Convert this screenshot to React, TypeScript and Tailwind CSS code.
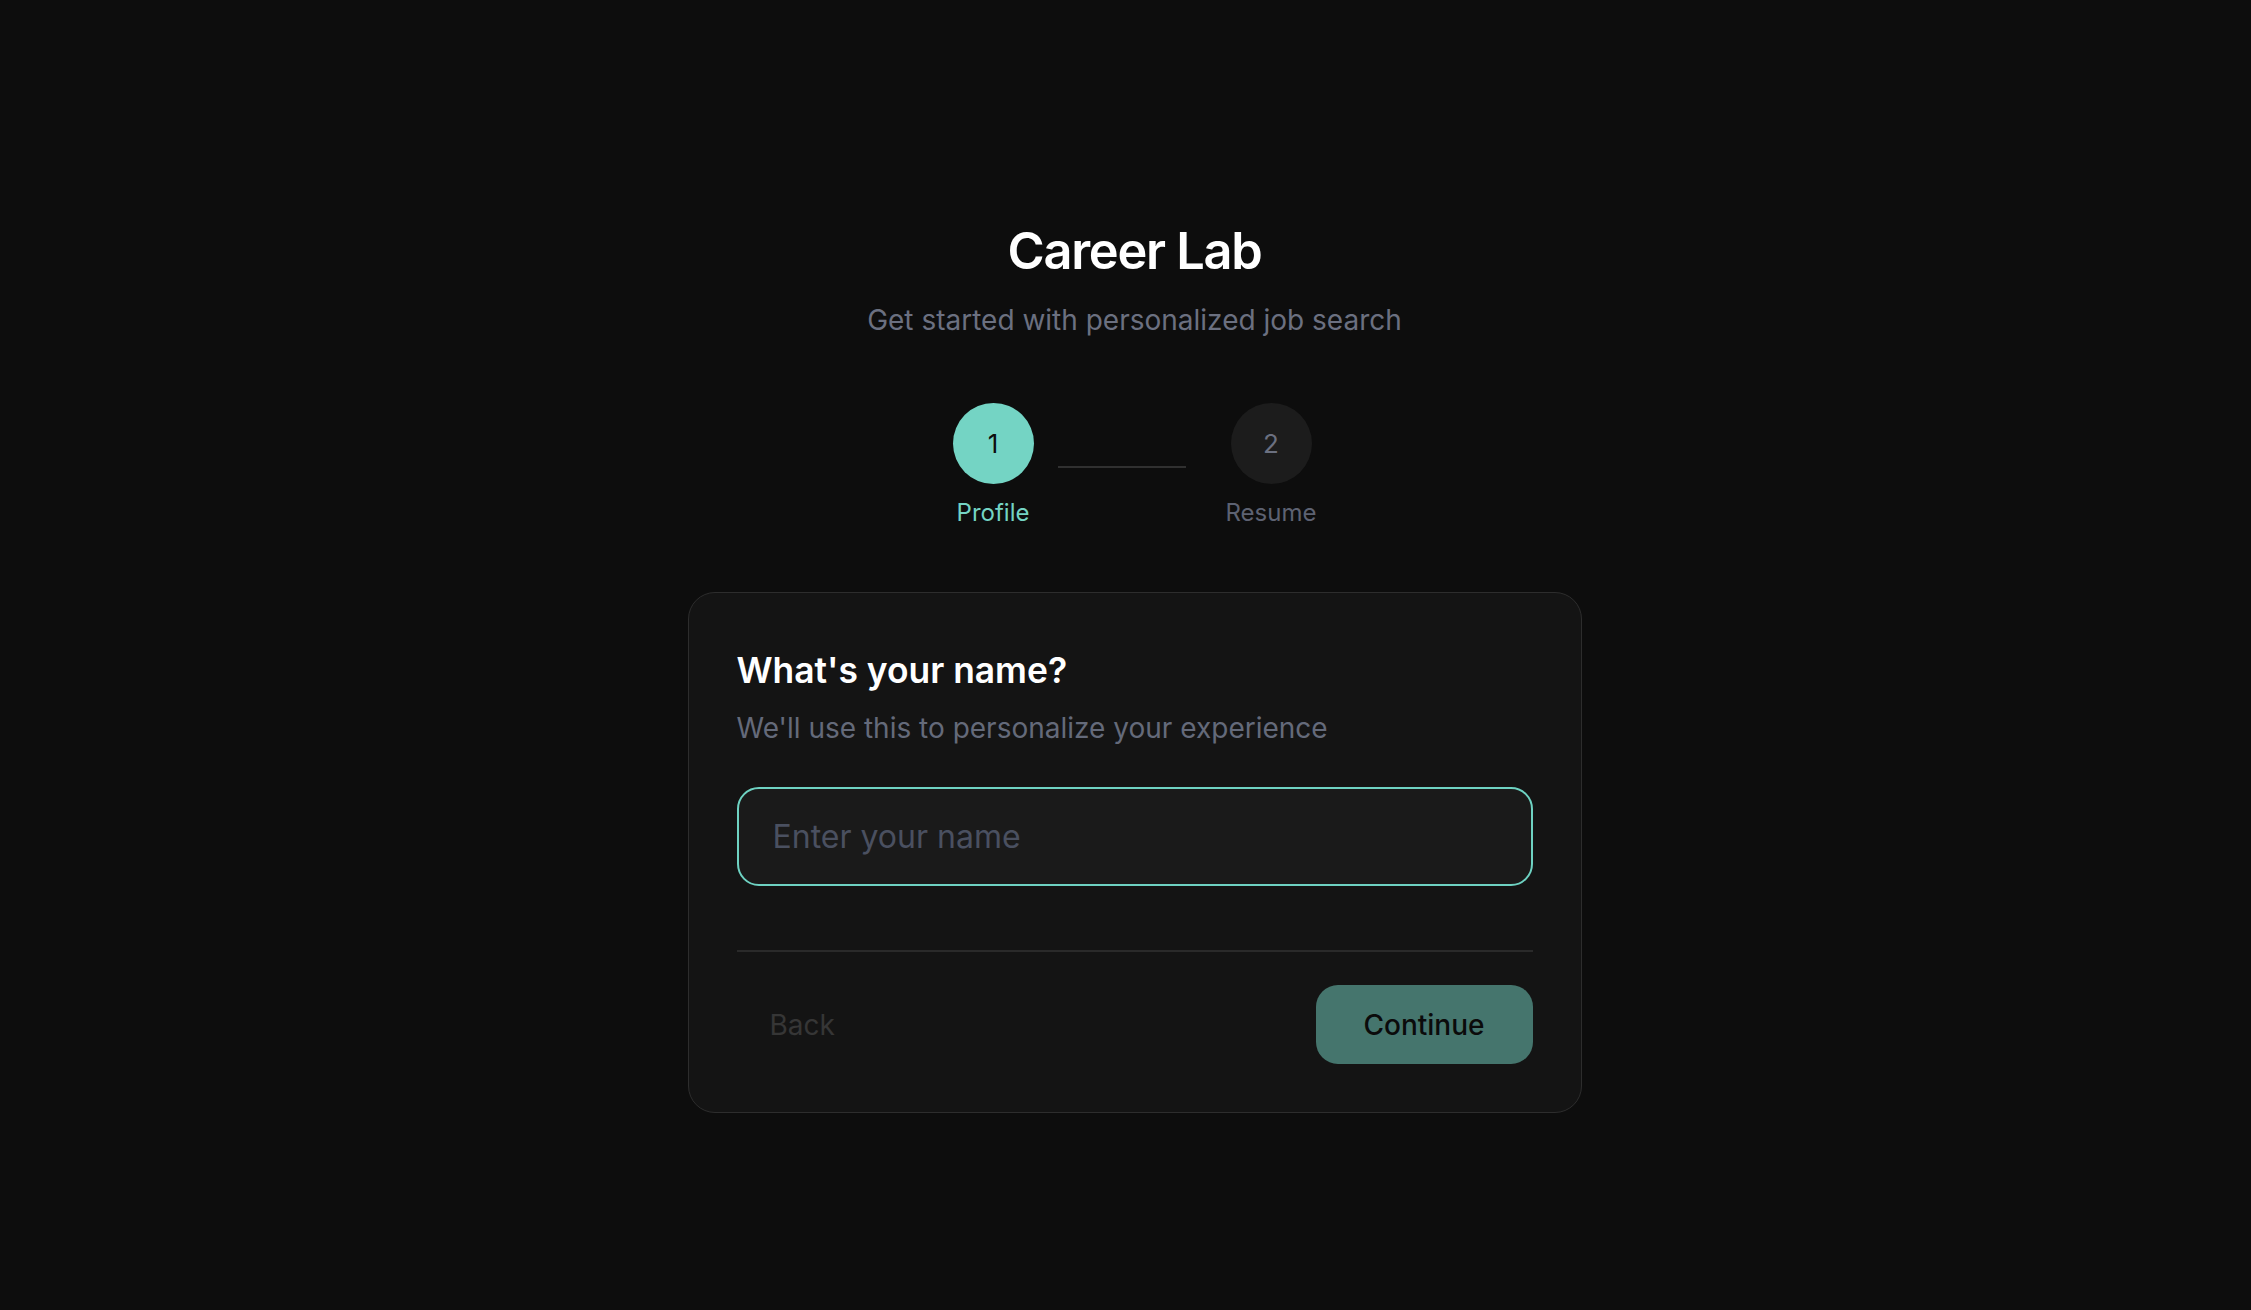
import { useState } from 'react';

const steps = [
  { id: 1, label: 'Profile' },
  { id: 2, label: 'Resume' },
];

const StepDot = (props: { id: number; label: string; active: boolean }) => {
  return (
    <div className="flex flex-col items-center">
      <div
        className={
          props.active
            ? 'flex items-center justify-center size-[81px] rounded-full bg-[#74d4c4] text-[#0d0d0d] text-[26px]'
            : 'flex items-center justify-center size-[81px] rounded-full bg-[#1c1c1c] text-[#6b7080] text-[26px]'
        }
      >
        {props.id}
      </div>
      <span
        className={
          props.active
            ? 'mt-[12px] text-[24px] leading-[34px] text-[#74d4c4]'
            : 'mt-[12px] text-[24px] leading-[34px] text-[#5d6272]'
        }
      >
        {props.label}
      </span>
    </div>
  );
};

export default function App() {
  const [name, setName] = useState('');

  return (
    <div
      className="min-h-screen w-full bg-[#0d0d0d] pl-[18px] pt-[222px] text-white"
      style={{ fontFamily: 'Inter, "Noto Sans", sans-serif' }}
    >
      <div className="flex flex-col items-center">
        <h1 className="text-[50.5px] leading-[57px] font-semibold tracking-tight text-white">
          Career Lab
        </h1>
        <p className="mt-[21px] text-[28px] leading-[40px] text-[#6b7080]">
          Get started with personalized job search
        </p>

        <div className="mt-[63px] flex items-center">
          <StepDot id={steps[0].id} label={steps[0].label} active />
          <div className="ml-[24px] mr-[40px] h-[2px] w-[128px] bg-[#303030]" />
          <StepDot id={steps[1].id} label={steps[1].label} active={false} />
        </div>

        <div className="mt-[62px] w-[894px] rounded-[27px] border-[1.5px] border-[#2d2d2d] bg-[#141414] px-[48px] pt-[55px] pb-[48px]">
          <h2 className="text-[35.4px] leading-[46px] font-semibold text-white">
            What's your name?
          </h2>
          <p className="mt-[14px] text-[28px] leading-[40px] text-[#646a7a]">
            We'll use this to personalize your experience
          </p>

          <input
            value={name}
            onChange={(e) => setName(e.target.value)}
            placeholder="Enter your name"
            className="mt-[39px] block h-[99px] w-full rounded-[22px] border-2 border-[#6ed2c2] bg-[#1a1a1a] px-[34px] text-[32px] text-white placeholder:text-[#4a5060] outline-none"
          />

          <div className="mt-[64px] h-[2px] w-full bg-[#2a2a2a]" />

          <div className="mt-[33px] flex items-center justify-between">
            <button className="px-[33px] text-[28px] text-[#363636]">Back</button>
            <button className="h-[79px] w-[217px] rounded-[22px] bg-[#45756d] text-[28px] font-medium text-[#0b0b0b]">
              Continue
            </button>
          </div>
        </div>
      </div>
    </div>
  );
}
